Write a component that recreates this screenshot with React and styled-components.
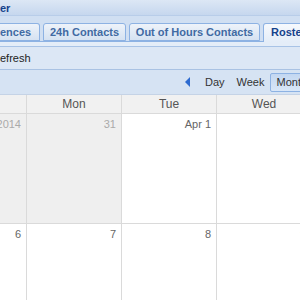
import styled, { createGlobalStyle } from "styled-components"

const GlobalStyle = createGlobalStyle`
    html, body {
        margin: 0;
        padding: 0;
        background: #fff;
    }
    body {
        font-family: "Liberation Sans", Arial, sans-serif;
    }
`

const Frame = styled.div`
    width: 300px;
    height: 300px;
    overflow: hidden;
    display: flex;
    flex-direction: column;
`

const TitleBar = styled.div`
    height: 15px;
    flex: none;
    background: linear-gradient(#dce7f5, #c6d7ee);
    border-bottom: 1px solid #b8cde9;
    color: #15428b;
    font: bold 11px "Liberation Sans", Tahoma, sans-serif;
    line-height: 16px;
`

const TabStrip = styled.div`
    height: 26px;
    flex: none;
    background: #d0dff2;
    display: flex;
    align-items: flex-end;
    gap: 3px;
    box-sizing: border-box;
    border-bottom: 1px solid #8db2e3;
`

const Tab = styled.div`
    flex: none;
    width: ${p => p.$w}px;
    height: ${p => (p.$active ? 19 : 18)}px;
    margin-bottom: ${p => (p.$active ? -1 : 0)}px;
    box-sizing: border-box;
    border: 1px solid #8db2e3;
    border-bottom: ${p => (p.$active ? "none" : "1px solid #8db2e3")};
    border-radius: 3px 3px 0 0;
    background: ${p => (p.$active ? "linear-gradient(#f6f9fd, #e4edf8)" : "linear-gradient(#eef3fa, #d5e2f2)")};
    color: ${p => (p.$active ? "#15428b" : "#416aa3")};
    font: bold 11px "Liberation Sans", Tahoma, sans-serif;
    line-height: 17px;
    text-align: ${p => p.$align || "center"};
    padding-left: ${p => p.$pl || 0}px;
    padding-right: ${p => p.$pr || 0}px;
    white-space: nowrap;
    overflow: hidden;
`

const Spacer = styled.div`
    height: 4px;
    flex: none;
    background: #e4edf8;
    border-bottom: 1px solid #a8c3e6;
`

const Toolbar = styled.div`
    height: 23px;
    flex: none;
    box-sizing: border-box;
    background: #dce7f5;
    border-bottom: 1px solid #a9c2e3;
    display: flex;
    align-items: center;
    font: 11px "Liberation Sans", Tahoma, sans-serif;
    color: #222;
`

const NavBar = styled.div`
    height: 24px;
    flex: none;
    box-sizing: border-box;
    background: #d6e3f3;
    display: flex;
    align-items: center;
    padding-left: 185px;
    font: 11px "Liberation Sans", Tahoma, sans-serif;
    color: #333;
    white-space: nowrap;
`

const Arrow = styled.span`
    flex: none;
    width: 0;
    height: 0;
    border-top: 5px solid transparent;
    border-bottom: 5px solid transparent;
    border-right: 5px solid #2d6bd0;
    margin-right: 9px;
`

const ViewButton = styled.div`
    flex: none;
    height: 19px;
    line-height: 17px;
    box-sizing: border-box;
    padding: 0 5px;
    border: 1px solid ${p => (p.$pressed ? "#8db2e3" : "transparent")};
    border-radius: 2px;
    background: ${p => (p.$pressed ? "linear-gradient(#c3d7f1, #d9e7f8)" : "transparent")};
`

const Calendar = styled.div`
    flex: 1;
    display: grid;
    grid-template-columns: 95px 95px 95px 95px;
    grid-template-rows: 19px 110px 110px;
    margin-left: -68px;
    width: 380px;
    border-top: 1px solid #c5d3e6;
    font-family: "Liberation Sans", Arial, sans-serif;
`

const DayHead = styled.div`
    background: #f1f1f1;
    border-right: 1px solid #dadada;
    border-bottom: 1px solid #dadada;
    color: #555;
    font-size: 12px;
    text-align: center;
    line-height: 18px;
`

const DayCell = styled.div`
    background: ${p => (p.$prev ? "#efefef" : "#fff")};
    border-right: 1px solid #dadada;
    border-bottom: 1px solid #dadada;
    color: ${p => (p.$prev ? "#aaa" : "#666")};
    font-size: 11px;
    text-align: right;
    padding: 4px 5px 0 0;
`

const weeks = [
    [{ t: "2014", prev: true }, { t: "31", prev: true }, { t: "Apr 1" }, { t: "2" }],
    [{ t: "6" }, { t: "7" }, { t: "8" }, { t: "9" }],
]

const App = () => {
    return (
        <Frame>
            <GlobalStyle />
            <TitleBar>er</TitleBar>
            <TabStrip>
                <Tab $w={40} $align="right" $pr={9} style={{ borderLeft: "none", borderRadius: "0 3px 0 0" }}>ences</Tab>
                <Tab $w={83}>24h Contacts</Tab>
                <Tab $w={131}>Out of Hours Contacts</Tab>
                <Tab $w={50} $active $align="left" $pl={7}>Roster</Tab>
            </TabStrip>
            <Spacer />
            <Toolbar>efresh</Toolbar>
            <NavBar>
                <Arrow />
                <ViewButton>Day</ViewButton>
                <ViewButton>Week</ViewButton>
                <ViewButton $pressed>Month</ViewButton>
            </NavBar>
            <Calendar>
                {["Sun", "Mon", "Tue", "Wed"].map(d => (
                    <DayHead key={d}>{d}</DayHead>
                ))}
                {weeks.map((w, i) =>
                    w.map((c, j) => (
                        <DayCell key={i + "-" + j} $prev={c.prev}>
                            {c.t}
                        </DayCell>
                    ))
                )}
            </Calendar>
        </Frame>
    )
}

export default App
